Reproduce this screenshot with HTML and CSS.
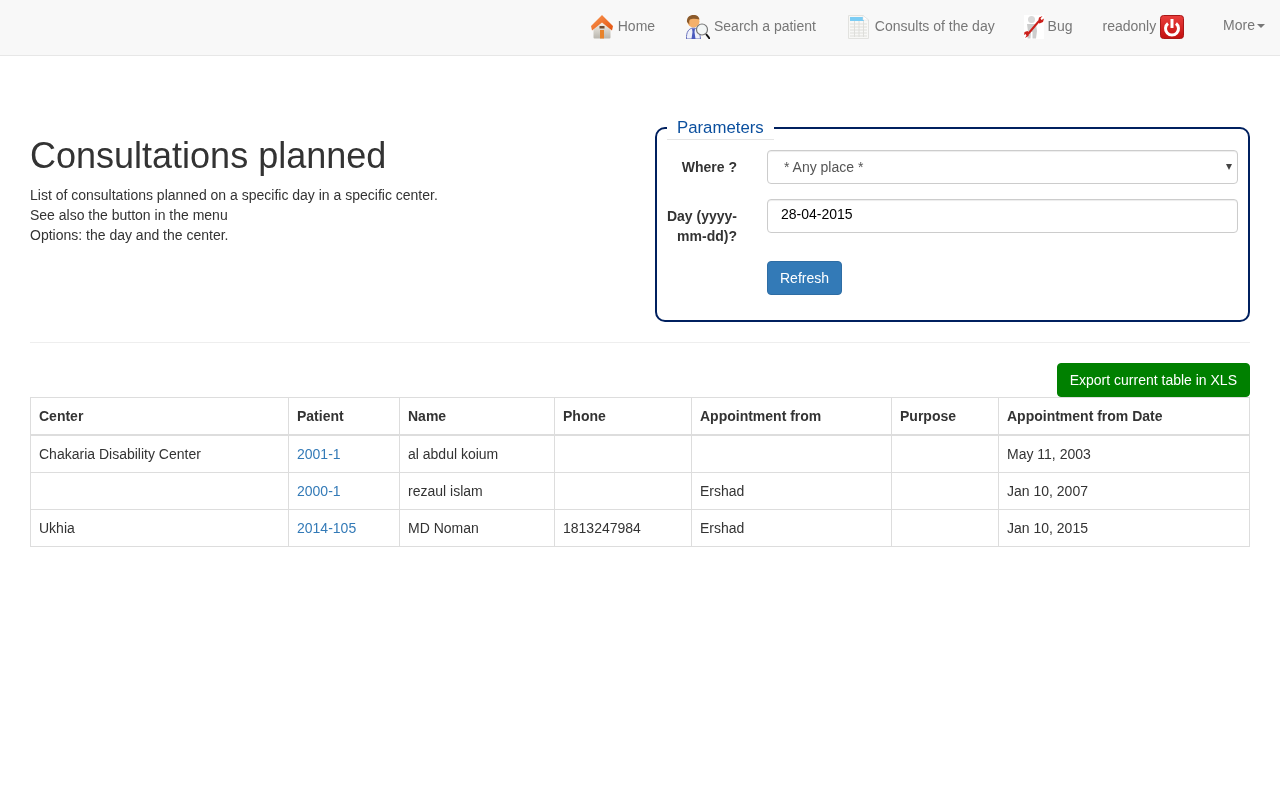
FILE: index.html
```html
<!DOCTYPE html>
<html lang="en">
<head>
    <meta charset="UTF-8">
    <meta name="viewport" content="width=device-width, initial-scale=1.0">
    <title>Consultations planned</title>
    <link rel="stylesheet" href="styles.css">
</head>
<body>
    <nav class="navbar">
        <ul class="nav-list">
            <li><a href="#">
                <svg class="nav-icon" width="24" height="24" viewBox="0 0 24 24">
                    <defs>
                        <linearGradient id="wall" x1="0" y1="0" x2="0" y2="1"><stop offset="0" stop-color="#fbf7ef"/><stop offset="1" stop-color="#b9b6ae"/></linearGradient>
                        <linearGradient id="roof" x1="0" y1="0" x2="1" y2="1"><stop offset="0" stop-color="#fb9a55"/><stop offset="1" stop-color="#e2500c"/></linearGradient>
                    </defs>
                    <path d="M3.500 13 12 6l8.500 7v9.500q0 1-1 1h-15q-1 0-1-1z" fill="url(#wall)"/>
                    <path d="M12 0 23 11 22 15.500 12 7.500 2 15.500 1 11z" fill="url(#roof)"/>
                    <rect x="9.500" y="11" width="5" height="2.500" fill="#6d4c33"/>
                    <rect x="10" y="15" width="4" height="8.500" fill="#e8832b"/>
                </svg> Home</a></li>
            <li class="nav-gap"><a href="#">
                <svg class="nav-icon" width="24" height="24" viewBox="0 0 24 24">
                    <path d="M.500 24C0 17 3 13 7.500 13S14 17 14.500 24z" fill="#eef0fb" stroke="#6a73bd"/>
                    <path d="M6 13.500h3L8.500 17l1 7H5.500l1-7z" fill="#4a59bd"/>
                    <circle cx="7.500" cy="6.500" r="6" fill="#f5b06a"/>
                    <path d="M1 7C.500 2.500 3.500 0 7.500 0s5.500 2 6 4.500C10 3.500 6 3.500 4 4.500 3 5.500 3 7.500 3.500 9.500z" fill="#8b5a2b"/>
                    <line x1="20" y1="19" x2="24" y2="24" stroke="#111" stroke-width="2"/>
                    <circle cx="16" cy="14.500" r="5.500" fill="#f3f6f6" stroke="#777" stroke-width="1.200"/>
                </svg> Search a patient</a></li>
            <li class="nav-gap"><a href="#">
                <svg class="nav-icon" width="24" height="24" viewBox="0 0 24 24">
                    <path d="M1.500 .500H16L21.500 5V23.500H1.500z" fill="#f8f8f6" stroke="#e2e2df"/>
                    <rect x="3" y="2" width="14" height="4" fill="#7ccdf4"/>
                    <path d="M16 .500V5H21.500z" fill="#fff" stroke="#dddddd" stroke-width=".5"/>
                    <path d="M3 9H20M3 12H20M3 15H20M3 18H20M3 21H20M7.500 6V22M12 6V22M16.500 6V22" stroke="#dededa" fill="none"/>
                </svg> Consults of the day</a></li>
            <li class="nav-tight"><a href="#">
                <svg class="nav-icon" width="20" height="24" viewBox="0 0 20 24">
                    <rect width="20" height="24" fill="#fff"/>
                    <circle cx="7.500" cy="4.500" r="3.500" fill="#d9d9d9"/>
                    <path d="M3 9h9l1 7-1 7.500H8.500V17H7l-.5 6.500h-3l.5-7z" fill="#cdcdcd"/>
                    <path d="M4 19 15 6" stroke="#cc1f1a" stroke-width="2"/>
                    <path d="M14 7 15 2.500 18.500 1 16.500 3.500 17.500 5 20 3.500 19 7 15.500 8.500zM5 17.500 4.500 21 1 23 2.500 20.500 1.500 19 0 20 .500 17 3.500 16z" fill="#cc1f1a"/>
                </svg> Bug</a></li>
            <li><a href="#">readonly
                <svg class="nav-icon" width="24" height="24" viewBox="0 0 24 24">
                    <defs>
                        <linearGradient id="power" x1="0" y1="0" x2="0" y2="1"><stop offset="0" stop-color="#ea3f3d"/><stop offset="1" stop-color="#c30f0f"/></linearGradient>
                    </defs>
                    <rect x=".500" y=".500" width="23" height="23" rx="3" fill="url(#power)" stroke="#a81818"/>
                    <path d="M8 8.500a6.500 6.500 0 1 0 8 0" fill="none" stroke="#fff" stroke-width="3"/>
                    <line x1="12" y1="4" x2="12" y2="13" stroke="#fff" stroke-width="3"/>
                </svg></a></li>
            <li class="nav-more"><a href="#">More<span class="caret"></span></a></li>
        </ul>
    </nav>

    <main class="page">
        <section class="top-row">
            <div class="intro">
                <h1>Consultations planned</h1>
                <p>List of consultations planned on a specific day in a specific center.<br>
                See also the button in the menu<br>
                Options: the day and the center.</p>
            </div>

            <fieldset class="params">
                <legend>Parameters</legend>
                <form class="param-form">
                    <label for="where">Where ?</label>
                    <div class="select-wrap">
                        <select id="where" class="field field-select">
                            <option>* Any place *</option>
                        </select>
                    </div>
                    <label for="day">Day (yyyy-mm-dd)?</label>
                    <input id="day" class="field field-date" type="text" value="28-04-2015">
                    <button class="btn btn-refresh" type="button">Refresh</button>
                </form>
            </fieldset>
        </section>

        <hr>

        <div class="export-row">
            <button class="btn btn-export" type="button">Export current table in XLS</button>
        </div>

        <table class="consults">
            <colgroup>
                <col class="col-center">
                <col class="col-patient">
                <col class="col-name">
                <col class="col-phone">
                <col class="col-from">
                <col class="col-purpose">
                <col class="col-date">
            </colgroup>
            <thead>
                <tr>
                    <th>Center</th>
                    <th>Patient</th>
                    <th>Name</th>
                    <th>Phone</th>
                    <th>Appointment from</th>
                    <th>Purpose</th>
                    <th>Appointment from Date</th>
                </tr>
            </thead>
            <tbody>
                <tr>
                    <td>Chakaria Disability Center</td>
                    <td><a href="#">2001-1</a></td>
                    <td>al abdul koium</td>
                    <td></td>
                    <td></td>
                    <td></td>
                    <td>May 11, 2003</td>
                </tr>
                <tr>
                    <td></td>
                    <td><a href="#">2000-1</a></td>
                    <td>rezaul islam</td>
                    <td></td>
                    <td>Ershad</td>
                    <td></td>
                    <td>Jan 10, 2007</td>
                </tr>
                <tr>
                    <td>Ukhia</td>
                    <td><a href="#">2014-105</a></td>
                    <td>MD Noman</td>
                    <td>1813247984</td>
                    <td>Ershad</td>
                    <td></td>
                    <td>Jan 10, 2015</td>
                </tr>
            </tbody>
        </table>
    </main>
</body>
</html>
```

FILE: styles.css
```css
* {
    box-sizing: border-box;
}

body {
    margin: 0;
    font-family: "Liberation Sans", Arial, sans-serif;
    font-size: 14px;
    line-height: 20px;
    color: #333;
    background-color: #fff;
    will-change: transform;
}

a {
    color: #337ab7;
    text-decoration: none;
}

.navbar {
    height: 56px;
    background-color: #f8f8f8;
    border-bottom: 1px solid #e7e7e7;
}

.nav-list {
    display: flex;
    justify-content: flex-end;
    margin: 0;
    padding: 0;
    list-style: none;
}

.nav-list a {
    display: block;
    padding: 15px;
    color: #777;
    white-space: nowrap;
}

.nav-icon {
    vertical-align: middle;
}

.nav-gap {
    margin-left: 1px;
}

.nav-tight {
    margin-left: -1px;
}

.nav-more {
    margin-left: 9px;
}

.caret {
    display: inline-block;
    margin-left: 2px;
    vertical-align: middle;
    border-top: 4px solid #777;
    border-right: 4px solid transparent;
    border-left: 4px solid transparent;
}

.page {
    padding: 60px 30px 0;
}

.top-row {
    display: grid;
    grid-template-columns: 1fr 595px;
    column-gap: 15px;
}

h1 {
    margin: 20px 0 9px;
    font-size: 36px;
    font-weight: 500;
    line-height: 1.1;
}

.intro p {
    margin: 0;
}

.params {
    min-width: 0;
    margin: 0;
    padding: 0 10px 25px;
    border: 2px solid #00205f;
    border-radius: 10px;
}

legend {
    width: auto;
    margin-bottom: 10px;
    padding: 0 10px;
    font-size: 16.8px;
    line-height: 23px;
    color: #0b4f9e;
    border-bottom: 1px solid #e5e5e5;
}

.param-form {
    display: grid;
    grid-template-columns: 70px 1fr;
    column-gap: 30px;
    row-gap: 15px;
}

.param-form label {
    margin-left: -2px;
    padding-top: 7px;
    font-weight: bold;
    text-align: right;
}

.select-wrap {
    position: relative;
}

/* small arrow over the select, the native one is too big */
.select-wrap::after {
    content: "";
    position: absolute;
    top: 14px;
    right: 6px;
    border-top: 6px solid #444;
    border-right: 3px solid transparent;
    border-left: 3px solid transparent;
    pointer-events: none;
}

.field {
    display: block;
    width: 100%;
    height: 34px;
    padding: 6px 12px;
    font-family: inherit;
    font-size: 14px;
    line-height: 20px;
    color: #555;
    background-color: #fff;
    border: 1px solid #ccc;
    border-radius: 4px;
    box-shadow: inset 0 1px 1px rgba(0, 0, 0, .075);
}

.field-select {
    padding-left: 16px;
    appearance: none;
}

.field-date {
    padding: 4px 13px 8px;
    color: #000;
}

.btn {
    display: inline-block;
    height: 34px;
    padding: 6px 12px;
    font-family: inherit;
    font-size: 14px;
    line-height: 20px;
    color: #fff;
    border: 1px solid transparent;
    border-radius: 4px;
}

.btn-refresh {
    grid-column: 2;
    justify-self: start;
    background-color: #337ab7;
    border-color: #2e6da4;
}

hr {
    margin: 20px 0;
    border: 0;
    border-top: 1px solid #eee;
}

.export-row {
    display: flex;
    justify-content: flex-end;
}

.btn-export {
    background-color: green;
    border-color: green;
}

.consults {
    width: 100%;
    table-layout: fixed;
    border-collapse: collapse;
}

.consults th,
.consults td {
    padding: 8px;
    border: 1px solid #ddd;
    text-align: left;
}

.consults th {
    border-bottom-width: 2px;
}

.col-center { width: 258px; }
.col-patient { width: 111px; }
.col-name { width: 155px; }
.col-phone { width: 137px; }
.col-from { width: 200px; }
.col-purpose { width: 107px; }
.col-date { width: 251px; }
```
